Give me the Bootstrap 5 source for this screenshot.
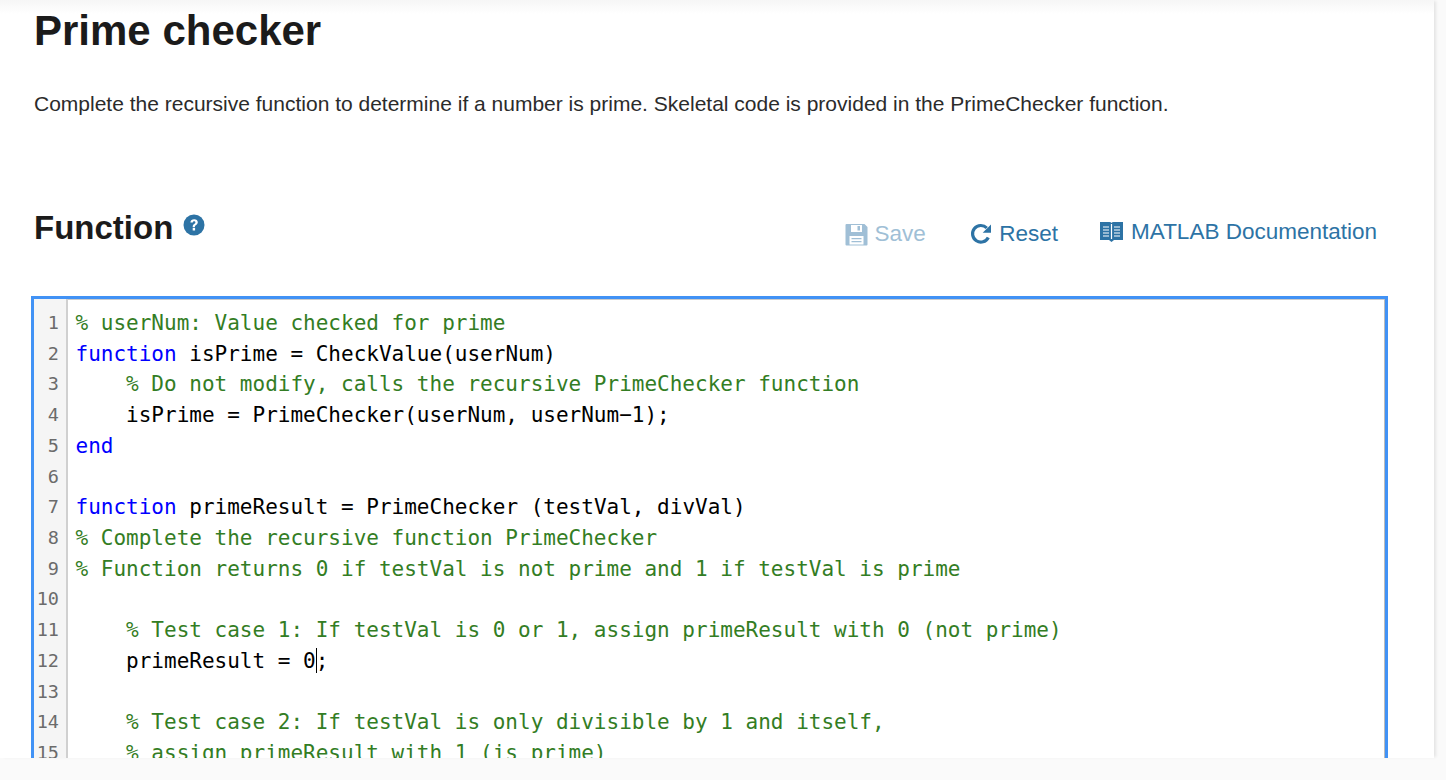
<!DOCTYPE html>
<html lang="en">
<head>
<meta charset="utf-8">
<title>Prime checker</title>
<link href="https://cdn.jsdelivr.net/npm/bootstrap@5.3.0/dist/css/bootstrap.min.css" rel="stylesheet">
<style>
html,body{height:780px;overflow:hidden;background:#fafafa;}
body{font-family:"Liberation Sans",Arial,sans-serif;color:#1f1f1f;}
.sheet{width:1434px;height:758px;background:linear-gradient(#f6f6f6,#fff 14px);overflow:hidden;box-shadow:3px 0 3px -1px rgba(0,0,0,.09);padding:0 46px 0 31px;}
.ttl{font-size:42px;font-weight:700;line-height:48px;margin:7px 0 0 3px;color:#1b1b1b;}
.lede{font-size:21px;line-height:28px;margin:35px 0 0 3px;color:#2b2b2b;}
.headrow{margin-top:90px;height:88px;}
.subttl{font-size:33px;font-weight:700;line-height:40px;margin:0 0 0 3px;color:#1b1b1b;}
.qmark{margin:6px 0 0 10px;}
.acts{color:#2d73a5;font-size:22.5px;line-height:28px;padding-right:11px;margin-top:12px;}
.acts a{color:inherit;text-decoration:none;gap:6px;}
.acts a.sv{color:#a0bfd6;margin-right:43px;}
.acts a.rs{margin-right:42px;gap:6.500px;}
.acts a.up{margin-top:-4px;gap:8px;}
.ed{border:3px solid #4192f5;height:490px;overflow:hidden;background:#fff;box-shadow:inset -1px 0 0 #bbb,inset 0 1px 0 #ccc;font-family:"DejaVu Sans Mono",monospace;font-size:21px;line-height:30.72px;}
.gut{width:34px;background:#f5f5f5;border-right:2px solid #d0d0d0;color:#6b6b6b;text-align:right;font-size:18.5px;padding:9px 7px 0 0;flex:none;}
.src{padding:9px 0 0 7.500px;white-space:pre;color:#000;}
.src div,.gut div{height:30.72px;}
.kw{color:#0000ff;}
.cm{color:#337d24;}
.caret{display:inline-block;width:1px;height:25px;background:#000;vertical-align:-5px;margin-right:-1px;}
</style>
</head>
<body>
<main class="sheet">
<h1 class="ttl">Prime checker</h1>
<p class="lede">Complete the recursive function to determine if a number is prime. Skeletal code is provided in the PrimeChecker function.</p>
<div class="headrow d-flex justify-content-between align-items-start">
<div class="d-flex align-items-start">
<h2 class="subttl">Function</h2>
<svg class="qmark" width="22" height="22" viewBox="0 0 22 22"><circle cx="11" cy="11" r="10.5" fill="#2d73a5"/><path d="M7.4 8.6c.1-2.2 1.700-3.300 3.800-3.300 2.100 0 3.600 1.200 3.600 3 0 1.300-.7 2-1.700 2.700-.9.6-1.200 1-1.200 1.800v.4H9.700v-.6c0-1.300.5-2 1.500-2.700.8-.5 1.200-.9 1.200-1.500 0-.7-.5-1.100-1.200-1.100-.8 0-1.300.5-1.400 1.300z" fill="#fff"/><rect x="9.700" y="14" width="2.400" height="2.500" fill="#fff"/></svg>
</div>
<div class="acts d-flex align-items-center">
<a href="#" class="sv d-flex align-items-center">
<svg width="23" height="23" viewBox="0 0 23 23"><path fill-rule="evenodd" fill="#a0bfd6" d="M1.500 1h18l3 3v17.500a1 1 0 0 1-1 1h-20a1 1 0 0 1-1-1v-19.500a1 1 0 0 1 1-1zM6 2v7h11V2zM12.500 3h2.500v4.500h-2.500zM4.500 13v8.500h14V13zM6.500 15h10v1.200h-10zM6.500 18h10v1.200h-10z"/></svg>
<span>Save</span></a>
<a href="#" class="rs d-flex align-items-center">
<svg width="24" height="24" viewBox="0 0 24 24"><path d="M19.300 15.500a8.300 8.300 0 1 1-1.500-9.500" fill="none" stroke="#2d73a5" stroke-width="3.200"/><path d="M22 2.500v8.300h-8.300z" fill="#2d73a5"/></svg>
<span>Reset</span></a>
<a href="#" class="up d-flex align-items-center">
<svg width="23" height="22" viewBox="0 0 23 22"><path fill="#2d73a5" d="M0 1h9.500q1.500 0 2 1 .5-1 2-1H23v18h-9l-2.500 2-2.500-2H0z"/><path stroke="#fff" stroke-width="1.200" d="M3 6h6M3 9h6M3 12h6M3 15h6M14 6h6M14 9h6M14 12h6M14 15h6M11.500 3v15"/></svg>
<span>MATLAB Documentation</span></a>
</div>
</div>
<section class="ed d-flex">
<div class="gut"><div>1</div><div>2</div><div>3</div><div>4</div><div>5</div><div>6</div><div>7</div><div>8</div><div>9</div><div>10</div><div>11</div><div>12</div><div>13</div><div>14</div><div>15</div></div>
<div class="src flex-grow-1"><div class="cm">% userNum: Value checked for prime</div><div><span class="kw">function</span> isPrime = CheckValue(userNum)</div><div class="cm">    % Do not modify, calls the recursive PrimeChecker function</div><div>    isPrime = PrimeChecker(userNum, userNum−1);</div><div class="kw">end</div><div></div><div><span class="kw">function</span> primeResult = PrimeChecker (testVal, divVal)</div><div class="cm">% Complete the recursive function PrimeChecker</div><div class="cm">% Function returns 0 if testVal is not prime and 1 if testVal is prime</div><div></div><div class="cm">    % Test case 1: If testVal is 0 or 1, assign primeResult with 0 (not prime)</div><div>    primeResult = 0<span class="caret"></span>;</div><div></div><div class="cm">    % Test case 2: If testVal is only divisible by 1 and itself,</div><div class="cm">    % assign primeResult with 1 (is prime)</div></div>
</section>
</main>
<script src="https://cdn.jsdelivr.net/npm/bootstrap@5.3.0/dist/js/bootstrap.bundle.min.js"></script>
</body>
</html>
